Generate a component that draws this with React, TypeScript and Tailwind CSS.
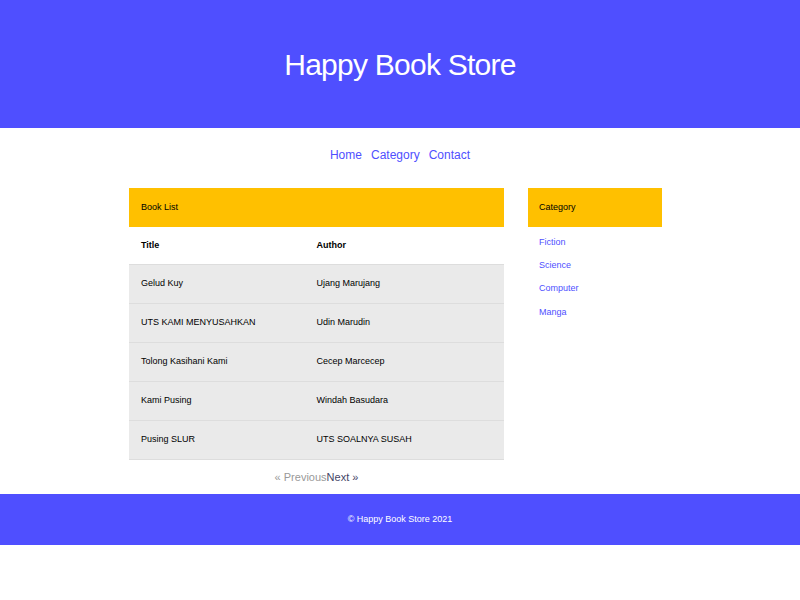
const books = [
  { title: 'Gelud Kuy', author: 'Ujang Marujang' },
  { title: 'UTS KAMI MENYUSAHKAN', author: 'Udin Marudin' },
  { title: 'Tolong Kasihani Kami', author: 'Cecep Marcecep' },
  { title: 'Kami Pusing', author: 'Windah Basudara' },
  { title: 'Pusing SLUR', author: 'UTS SOALNYA SUSAH' },
];

const categories = ['Fiction', 'Science', 'Computer', 'Manga'];

export default function App() {
  return (
    <div className="min-h-[600px] bg-white text-black" style={{ fontFamily: '"Liberation Sans Narrow", "Liberation Sans", Arial, sans-serif' }}>
      <header className="h-[128px] bg-[#4f4fff] flex items-center justify-center">
        <h1 className="text-[30px] text-white tracking-tight">Happy Book Store</h1>
      </header>
      <nav className="h-[60px] flex justify-center items-start pt-[18px] gap-[9px] text-[12px] text-[#4f4fff]">
        <a>Home</a>
        <a>Category</a>
        <a>Contact</a>
      </nav>
      <main className="ml-[129px] flex gap-[24px] items-start">
        <div className="w-[375px]">
          <div className="h-[39px] bg-[#ffc000] flex items-center px-[12px] text-[9px]">Book List</div>
          <div className="grid grid-cols-2 h-[38px] items-center px-[12px] text-[9px] font-bold border-b border-[#dddddd]">
            <span>Title</span>
            <span>Author</span>
          </div>
          {books.map(b => (
            <div key={b.title} className="grid grid-cols-2 h-[39px] items-center px-[12px] text-[9px] bg-[#eaeaea] border-b border-[#dddddd]">
              <span>{b.title}</span>
              <span>{b.author}</span>
            </div>
          ))}
          <div className="h-[34px] flex items-center justify-center text-[11px]">
            <span className="text-[#999999]">« Previous</span>
            <span className="text-[#444466]">Next »</span>
          </div>
        </div>
        <aside className="w-[134px]">
          <div className="h-[39px] bg-[#ffc000] flex items-center px-[11px] text-[9px]">Category</div>
          <ul className="px-[11px] pt-[4px] text-[9px] text-[#4f4fff]">
            {categories.map(c => (
              <li key={c} className="h-[23.3px] flex items-center">{c}</li>
            ))}
          </ul>
        </aside>
      </main>
      <footer className="h-[51px] bg-[#4f4fff] flex items-center justify-center text-[9px] text-white">
        © Happy Book Store 2021
      </footer>
    </div>
  );
}
